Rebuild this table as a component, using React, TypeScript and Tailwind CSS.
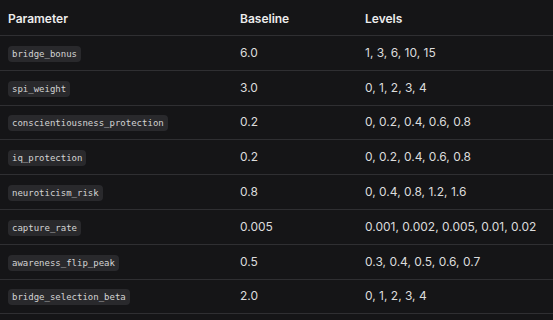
const rows = [
  { name: 'bridge_bonus', base: '6.0', levels: '1, 3, 6, 10, 15' },
  { name: 'spi_weight', base: '3.0', levels: '0, 1, 2, 3, 4' },
  { name: 'conscientiousness_protection', base: '0.2', levels: '0, 0.2, 0.4, 0.6, 0.8' },
  { name: 'iq_protection', base: '0.2', levels: '0, 0.2, 0.4, 0.6, 0.8' },
  { name: 'neuroticism_risk', base: '0.8', levels: '0, 0.4, 0.8, 1.2, 1.6' },
  { name: 'capture_rate', base: '0.005', levels: '0.001, 0.002, 0.005, 0.01, 0.02' },
  { name: 'awareness_flip_peak', base: '0.5', levels: '0.3, 0.4, 0.5, 0.6, 0.7' },
  { name: 'bridge_selection_beta', base: '2.0', levels: '0, 1, 2, 3, 4' },
]

export default function App() {
  return (
    <div className="h-[320px] w-[553px] overflow-hidden bg-[#151517] font-['Inter',sans-serif] text-xs">
      {/* header */}
      <div className="grid h-[36px] grid-cols-[232px_125px_1fr] items-center border-b border-[#2f2f32] pl-2 pt-[2px] font-semibold text-[#ececec]">
        <span>Parameter</span>
        <span>Baseline</span>
        <span>Levels</span>
      </div>

      {rows.map((r) => (
        <div
          key={r.name}
          className="grid h-[34.8px] grid-cols-[232px_125px_1fr] items-center border-b border-[#2f2f32] pl-2 text-[#dcdcdc]"
        >
          <span>
            <code className="rounded-[4px] bg-[#29292c] px-1 py-[3px] font-['DejaVu_Sans_Mono',monospace] text-[9px] text-[#d4d4d4]">
              {r.name}
            </code>
          </span>
          <span>{r.base}</span>
          <span>{r.levels}</span>
        </div>
      ))}
    </div>
  )
}
